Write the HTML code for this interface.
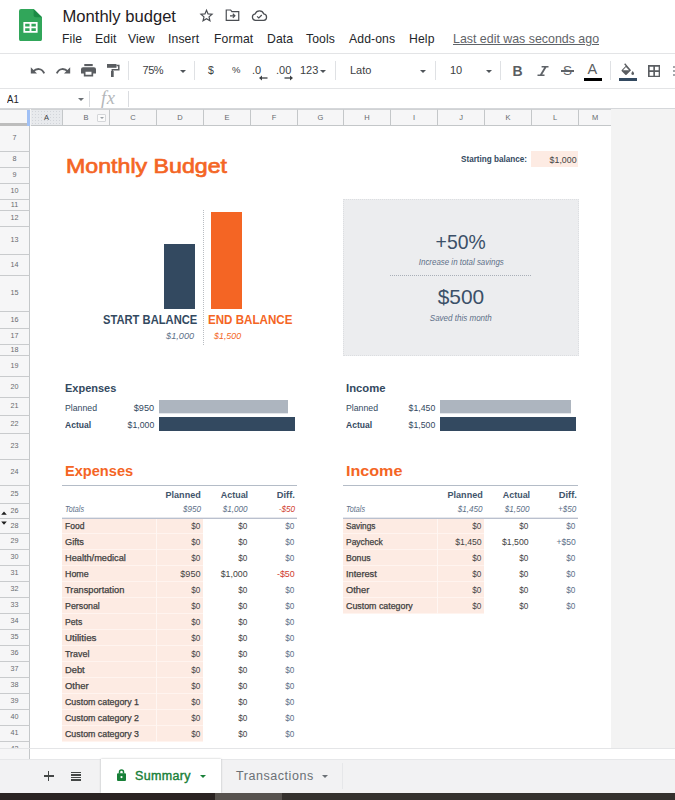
<!DOCTYPE html>
<html lang="en">
<head>
<meta charset="utf-8">
<title>Monthly budget</title>
<style>
html,body{margin:0;padding:0;}
body{width:675px;height:800px;overflow:hidden;position:relative;background:#fff;font-family:"Liberation Sans",sans-serif;color:#202124;}
div,span{box-sizing:border-box;}
.abs{position:absolute;}
#hdr{position:absolute;left:0;top:0;width:675px;height:54px;background:#fff;border-bottom:1px solid #e3e4e6;}
#title{position:absolute;left:62.5px;top:6.5px;font-size:16.6px;line-height:20px;color:#1f2023;white-space:nowrap;}
.menu{position:absolute;top:32px;letter-spacing:.12px;font-size:12.2px;line-height:15px;color:#24262a;white-space:nowrap;}
#tb{position:absolute;left:0;top:54px;width:675px;height:35px;background:#fff;border-bottom:1px solid #e3e4e6;}
.sep{position:absolute;top:7px;width:1px;height:19px;background:#dfe1e4;}
.tbt{position:absolute;top:9px;font-size:11px;line-height:14px;color:#3c4043;white-space:nowrap;}
.car{position:absolute;width:0;height:0;border-left:3.5px solid transparent;border-right:3.5px solid transparent;border-top:3.5px solid #50555a;}
#fb{position:absolute;left:0;top:89px;width:675px;height:20px;background:#fff;border-bottom:1px solid #d5d7da;}
#colh{position:absolute;left:0;top:109px;width:675px;height:17px;background:#f3f3f3;}
.ch{position:absolute;top:0;height:17px;background:#f6f6f7;border-right:1px solid #c4c7c9;border-bottom:1px solid #c4c7c9;border-top:1px solid #d0d2d4;font-size:7.5px;line-height:15.5px;text-align:center;color:#666a6e;}
.ch.sel{background:#e8eaed;color:#3c4043;background-image:radial-gradient(circle,#d2d5da .5px,transparent .7px);background-size:3px 3px;}
.flt{position:absolute;left:34px;top:4px;width:9px;height:8px;border:1px solid #d4d6d9;background:#fbfbfb;border-radius:1px;}
.flt:after{content:"";position:absolute;left:1.5px;top:2px;border-left:2px solid transparent;border-right:2px solid transparent;border-top:2.5px solid #9aa0a6;}
#rowh{position:absolute;left:0;top:0;width:30px;height:759px;}
.rh{position:absolute;left:0;width:30px;background:#f6f6f7;border-right:1px solid #c4c7c9;border-bottom:1px solid #c9cbcd;font-size:7.2px;text-align:center;color:#686b6e;}
#grid{position:absolute;left:30px;top:126px;width:581px;height:622px;background:#fff;}
.t{position:absolute;height:16px;line-height:17px;font-size:9.6px;white-space:nowrap;}
.r{text-align:right;}
.sx{display:inline-block;transform:scaleX(.9);transform-origin:left center;}
.r .sx{transform-origin:right center;}
.pk{position:absolute;background:#fdebe3;border-bottom:1px solid #fff4ef;}
.cat{color:#3d3d3d;-webkit-text-stroke:.3px #3d3d3d;}
.cat .sx{transform:scaleX(.95);}
.num{color:#434343;}
.dif{color:#5d7088;}
.dif.neg{color:#d0402e;}
.navy{color:#334960;}
.or{color:#f46524;}
.tx{position:absolute;white-space:nowrap;}
</style>
</head>
<body>
<!-- ===== header ===== -->
<div id="hdr">
  <svg class="abs" style="left:19.400px;top:8.700px" width="23" height="32.200" viewBox="0 0 22 31" preserveAspectRatio="none">
    <path d="M2 0h12l8 8v21a2 2 0 0 1-2 2H2a2 2 0 0 1-2-2V2a2 2 0 0 1 2-2z" fill="#31a65a"/>
    <path d="M14 0l8 8h-6a2 2 0 0 1-2-2z" fill="#1b8a45"/>
    <path d="M4.2 12.6h13.6v10.2H4.2z M5.9 14.3v2.5h4.2v-2.5z M11.9 14.3v2.5h4.2v-2.5z M5.9 18.5v2.6h4.2v-2.6z M11.9 18.5v2.6h4.2v-2.6z" fill="#fff" fill-rule="evenodd"/>
  </svg>
  <div id="title">Monthly budget</div>
  <!-- star -->
  <svg class="abs" style="left:198.500px;top:7.700px" width="15" height="15" viewBox="0 0 24 24"><path d="M12 3.6l2.5 5.9 6.4.55-4.85 4.2 1.45 6.25L12 17.2l-5.5 3.3 1.45-6.25L3.1 10.05l6.4-.55z" fill="none" stroke="#4a4d52" stroke-width="1.9" stroke-linejoin="miter"/></svg>
  <!-- move -->
  <svg class="abs" style="left:225px;top:8px" width="15" height="14" viewBox="0 0 24 22"><path d="M2 3h7l2 2.5h11v14H2z" fill="none" stroke="#4a4d52" stroke-width="1.9"/><path d="M8 12.3h7M12.5 9l3.4 3.3-3.4 3.3" fill="none" stroke="#4a4d52" stroke-width="1.8"/></svg>
  <!-- cloud -->
  <svg class="abs" style="left:251px;top:9px" width="17" height="13" viewBox="0 0 26 20"><path d="M7 17.5a5 5 0 0 1-.6-9.95A7 7 0 0 1 19.6 7.6 5 5 0 0 1 19.5 17.5z" fill="none" stroke="#4a4d52" stroke-width="1.9"/><path d="M9.3 11.3l2.6 2.5 4.6-4.6" fill="none" stroke="#4a4d52" stroke-width="1.8"/></svg>
  <div class="menu" style="left:62px">File</div>
  <div class="menu" style="left:95px">Edit</div>
  <div class="menu" style="left:128px">View</div>
  <div class="menu" style="left:168px">Insert</div>
  <div class="menu" style="left:214px">Format</div>
  <div class="menu" style="left:267px">Data</div>
  <div class="menu" style="left:306px">Tools</div>
  <div class="menu" style="left:349px">Add-ons</div>
  <div class="menu" style="left:409px">Help</div>
  <div class="menu" style="left:453px;color:#5f6368;text-decoration:underline;font-size:12.4px;letter-spacing:0">Last edit was seconds ago</div>
</div>
<!-- ===== toolbar ===== -->
<div id="tb">
  <!-- undo -->
  <svg class="abs" style="left:30px;top:12px" width="16" height="10" viewBox="0 0 16 10"><path d="M3.2 5.4C5 3.6 7 2.9 9 3.1c2.300.2 4.200 1.700 5.200 4.300" fill="none" stroke="#5a5d61" stroke-width="1.9"/><path d="M.8 1.200v6.200h6.200z" fill="#5a5d61"/></svg>
  <!-- redo -->
  <svg class="abs" style="left:55px;top:12px" width="16" height="10" viewBox="0 0 16 10"><path d="M12.800 5.400C11 3.600 9 2.900 7 3.100 4.700 3.300 2.800 4.800 1.800 7.400" fill="none" stroke="#5a5d61" stroke-width="1.900"/><path d="M15.200 1.200v6.200H9z" fill="#5a5d61"/></svg>
  <!-- print -->
  <svg class="abs" style="left:80.500px;top:10px" width="15" height="12.500" viewBox="0 0 16 13" preserveAspectRatio="none"><path d="M3.500 0h9v2.200h-9z" fill="#5a5d61"/><path d="M2.200 3.300h11.600A2.200 2.200 0 0 1 16 5.500V10h-3v3H3v-3H0V5.500a2.200 2.200 0 0 1 2.200-2.200zM4.800 8v3.300h6.400V8z" fill="#5a5d61" fill-rule="evenodd"/></svg>
  <!-- paint format -->
  <svg class="abs" style="left:105.500px;top:10px" width="14" height="13" viewBox="0 0 14 13"><path d="M1 0h9.500v3.800H1z" fill="#5a5d61"/><path d="M10.500 1.600h2.300v4.200H6.300v1.500" fill="none" stroke="#5a5d61" stroke-width="1.500"/><path d="M5 7h2.700v6H5z" fill="#5a5d61"/></svg>
  <div class="sep" style="left:128px"></div>
  <div class="tbt" style="left:142.5px;letter-spacing:-.45px">75%</div>
  <div class="car" style="left:179.500px;top:16px"></div>
  <div class="sep" style="left:194px"></div>
  <div class="tbt" style="left:208px;font-size:10.500px">$</div>
  <div class="tbt" style="left:232px;font-size:9.500px">%</div>
  <div class="tbt" style="left:252px;font-size:11px">.0</div>
  <svg class="abs" style="left:259px;top:21px" width="9" height="6" viewBox="0 0 9 6"><path d="M2 3h6.500" stroke="#3c4043" stroke-width="1.300"/><path d="M0 3l3-2.600v5.200z" fill="#3c4043"/></svg>
  <div class="tbt" style="left:276px;font-size:11px">.00</div>
  <svg class="abs" style="left:284px;top:21px" width="9" height="6" viewBox="0 0 9 6"><path d="M.5 3H7" stroke="#3c4043" stroke-width="1.300"/><path d="M9 3L6 .4v5.200z" fill="#3c4043"/></svg>
  <div class="tbt" style="left:300px;font-size:11px">123</div>
  <div class="car" style="left:319.500px;top:16px"></div>
  <div class="sep" style="left:335px"></div>
  <div class="tbt" style="left:350px">Lato</div>
  <div class="car" style="left:420px;top:16px"></div>
  <div class="sep" style="left:435px"></div>
  <div class="tbt" style="left:450px">10</div>
  <div class="car" style="left:486px;top:16px"></div>
  <div class="sep" style="left:500px"></div>
  <div class="tbt" style="left:512.500px;top:8px;font-size:14px;line-height:18px;font-weight:bold;color:#5a5d61">B</div>
  <svg class="abs" style="left:537px;top:12px" width="12" height="10" viewBox="0 0 12 10"><path d="M4.600 0h6.900v1.600H9.400L5.200 8.400h2.300V10H.500V8.400h2.500L7.200 1.600H4.600z" fill="#5f6368"/></svg>
  <div class="tbt" style="left:563px;top:8px;font-size:13.500px;line-height:18px;color:#5f6368">S</div><div class="abs" style="left:561px;top:16.400px;width:12.500px;height:1.300px;background:#5f6368"></div>
  <div class="tbt" style="left:587.500px;top:6px;font-size:14.500px;line-height:18px;color:#5a5d61">A</div>
  <div class="abs" style="left:584px;top:24px;width:18px;height:3px;background:#000"></div>
  <div class="sep" style="left:610px"></div>
  <!-- fill -->
  <svg class="abs" style="left:620.500px;top:8.500px" width="13.600" height="12.200" viewBox="0 0 15 13" preserveAspectRatio="none"><path d="M4.600.3L3.500 1.400l1.700 1.700L.9 7.400a.9.900 0 0 0 0 1.300l3.900 3.900a.9.900 0 0 0 1.300 0l5-5zM5.500 4.300L8.900 7.700H2.100z" fill="#5a5d61" fill-rule="evenodd"/><path d="M12.900 8.600s-1.500 1.700-1.500 2.700a1.500 1.500 0 0 0 3 0c0-1-1.500-2.700-1.500-2.700z" fill="#5a5d61"/></svg>
  <div class="abs" style="left:618.500px;top:24px;width:18.500px;height:3.300px;background:#334960"></div>
  <!-- borders -->
  <svg class="abs" style="left:647.700px;top:10.700px" width="12.300" height="12.300" viewBox="0 0 12 12"><path d="M.8.800h10.400v10.400H.8zM6 .8v10.400M.8 6h10.400" fill="none" stroke="#5a5d61" stroke-width="1.600"/></svg>
  <!-- merge (clipped) -->
  <div class="abs" style="left:673px;top:12px;width:4px;height:1.600px;background:#a4a7ab"></div>
  <div class="abs" style="left:673px;top:16px;width:4px;height:1.600px;background:#a4a7ab"></div>
  <div class="abs" style="left:673px;top:20px;width:4px;height:1.600px;background:#a4a7ab"></div>
</div>

<!-- ===== formula bar ===== -->
<div id="fb">
  <div class="abs" style="left:7px;top:3px;font-size:11px;line-height:14px;color:#202124;transform:scaleX(.87);transform-origin:left center">A1</div>
  <div class="car" style="left:78px;top:9px;border-left-width:3px;border-right-width:3px;border-top-width:3px;border-top-color:#6b7075"></div>
  <div class="abs" style="left:89px;top:2px;width:1px;height:16px;background:#dadce0"></div>
  <div class="abs" style="left:101px;top:-1px;font-family:'Liberation Serif',serif;font-style:italic;font-size:18.5px;line-height:20px;letter-spacing:.5px;color:#b4b7ba">fx</div>
  <div class="abs" style="left:128px;top:2px;width:1px;height:16px;background:#dadce0"></div>
</div>

<!-- ===== column headers ===== -->
<div id="colh">
<div class="ch sel" style="left:31px;width:32px">A</div>
<div class="ch" style="left:63px;width:47px">B<span class="flt"></span></div>
<div class="ch" style="left:110px;width:47px">C</div>
<div class="ch" style="left:157px;width:47px">D</div>
<div class="ch" style="left:204px;width:47px">E</div>
<div class="ch" style="left:251px;width:47px">F</div>
<div class="ch" style="left:298px;width:46px">G</div>
<div class="ch" style="left:344px;width:47px">H</div>
<div class="ch" style="left:391px;width:47px">I</div>
<div class="ch" style="left:438px;width:47px">J</div>
<div class="ch" style="left:485px;width:47px">K</div>
<div class="ch" style="left:532px;width:47px">L</div>
<div class="ch" style="left:579px;width:33px">M</div>
</div>
<div class="abs" style="left:611px;top:109px;width:64px;height:640px;background:#f3f3f3"></div>
<!-- ===== row headers ===== -->
<div id="rowh">
<div class="abs" style="left:0;top:109px;width:30px;height:17px;background:#f6f6f7;border-top:1px solid #d0d2d4"></div>
<div class="rh" style="top:126px;height:26px;line-height:24.5px">7</div>
<div class="rh" style="top:152px;height:16px;line-height:14.5px">8</div>
<div class="rh" style="top:168px;height:16px;line-height:14.5px">9</div>
<div class="rh" style="top:184px;height:16px;line-height:14.5px">10</div>
<div class="rh" style="top:200px;height:11px;line-height:9.5px">11</div>
<div class="rh" style="top:211px;height:16px;line-height:14.5px">12</div>
<div class="rh" style="top:227px;height:28px;line-height:26.5px">13</div>
<div class="rh" style="top:255px;height:21px;line-height:19.5px">14</div>
<div class="rh" style="top:276px;height:36px;line-height:34.5px">15</div>
<div class="rh" style="top:312px;height:17px;line-height:15.5px">16</div>
<div class="rh" style="top:329px;height:16px;line-height:14.5px">17</div>
<div class="rh" style="top:345px;height:11px;line-height:9.5px">18</div>
<div class="rh" style="top:356px;height:21px;line-height:19.5px">19</div>
<div class="rh" style="top:377px;height:21px;line-height:19.5px">20</div>
<div class="rh" style="top:398px;height:18px;line-height:16.5px">21</div>
<div class="rh" style="top:416px;height:18px;line-height:16.5px">22</div>
<div class="rh" style="top:434px;height:26px;line-height:24.5px">23</div>
<div class="rh" style="top:460px;height:26px;line-height:24.5px">24</div>
<div class="rh" style="top:486px;height:18px;line-height:16.5px">25</div>
<div class="rh" style="top:504px;height:15px;line-height:13.5px">26</div>
<div class="rh" style="top:519px;height:15px;line-height:13.5px">28</div>
<div class="rh" style="top:534px;height:16px;line-height:14.5px">29</div>
<div class="rh" style="top:550px;height:16px;line-height:14.5px">30</div>
<div class="rh" style="top:566px;height:16px;line-height:14.5px">31</div>
<div class="rh" style="top:582px;height:16px;line-height:14.5px">32</div>
<div class="rh" style="top:598px;height:16px;line-height:14.5px">33</div>
<div class="rh" style="top:614px;height:16px;line-height:14.5px">34</div>
<div class="rh" style="top:630px;height:16px;line-height:14.5px">35</div>
<div class="rh" style="top:646px;height:16px;line-height:14.5px">36</div>
<div class="rh" style="top:662px;height:16px;line-height:14.5px">37</div>
<div class="rh" style="top:678px;height:16px;line-height:14.5px">38</div>
<div class="rh" style="top:694px;height:16px;line-height:14.5px">39</div>
<div class="rh" style="top:710px;height:16px;line-height:14.5px">40</div>
<div class="rh" style="top:726px;height:16px;line-height:14.5px">41</div>
<div class="rh" style="top:742px;height:16px;line-height:14.5px">42</div>
<div class="abs" style="left:0;top:748px;width:30px;height:11px;background:#f6f6f7;border-right:1px solid #c4c7c9;border-top:1px solid #c9cbcd"></div>
<div class="abs" style="left:0;top:123px;width:28px;height:3px;background:#bdbdbd"></div>
<svg class="abs" style="left:0;top:510px" width="10" height="16" viewBox="0 0 10 16"><path d="M1.200 4.700h5.600L4 1.500z M1.200 11.500h5.600L4 14.700z" fill="#1f1f1f"/></svg>
<div class="abs" style="left:27px;top:110px;width:3px;height:16px;background:#a0c0f5"></div>
</div>
<!-- ===== grid ===== -->
<div id="grid"></div>
<!-- ===== sheet content ===== -->
<div class="abs" style="left:531px;top:151px;width:47px;height:16px;background:#fdebe3"></div>
<!-- balance chart -->
<div class="abs" style="left:164px;top:244px;width:31px;height:65px;background:#334960"></div>
<div class="abs" style="left:211px;top:212px;width:31px;height:97px;background:#f46524"></div>
<div class="abs" style="left:203px;top:210px;width:0;height:135px;border-left:1px dotted #b9bdc2"></div>
<!-- summary panel -->
<div class="abs" style="left:343px;top:199px;width:236px;height:157px;background:#ecedef;border:1px dotted #dcdee1"></div>
<div class="abs" style="left:390px;top:275px;width:141px;height:0;border-top:1px dotted #a9afb8"></div>
<!-- sparkline bars -->
<div class="abs" style="left:159px;top:400px;width:129px;height:14px;background:linear-gradient(#adb5bf 0,#adb5bf 13px,#e3e6ea 13px)"></div>
<div class="abs" style="left:159px;top:417px;width:136px;height:14px;background:#334960"></div>
<div class="abs" style="left:440px;top:400px;width:131px;height:14px;background:linear-gradient(#adb5bf 0,#adb5bf 13px,#e3e6ea 13px)"></div>
<div class="abs" style="left:440px;top:417px;width:136px;height:14px;background:#334960"></div>
<!-- table rules -->
<div class="abs" style="left:62px;top:485px;width:235px;height:1px;background:#b4bcc7"></div>
<div class="abs" style="left:343px;top:485px;width:235px;height:1px;background:#b4bcc7"></div>
<div class="abs" style="left:62px;top:517px;width:235px;height:2px;background:#bac0ce;border-top:1px solid #e6e8ed;z-index:3"></div>
<div class="abs" style="left:343px;top:517px;width:235px;height:2px;background:#bac0ce;border-top:1px solid #e6e8ed;z-index:3"></div>
<div class="pk" style="left:62px;top:519px;width:141px;height:15px"></div>
<div class="pk" style="left:62px;top:534px;width:141px;height:16px"></div>
<div class="pk" style="left:62px;top:550px;width:141px;height:16px"></div>
<div class="pk" style="left:62px;top:566px;width:141px;height:16px"></div>
<div class="pk" style="left:62px;top:582px;width:141px;height:16px"></div>
<div class="pk" style="left:62px;top:598px;width:141px;height:16px"></div>
<div class="pk" style="left:62px;top:614px;width:141px;height:16px"></div>
<div class="pk" style="left:62px;top:630px;width:141px;height:16px"></div>
<div class="pk" style="left:62px;top:646px;width:141px;height:16px"></div>
<div class="pk" style="left:62px;top:662px;width:141px;height:16px"></div>
<div class="pk" style="left:62px;top:678px;width:141px;height:16px"></div>
<div class="pk" style="left:62px;top:694px;width:141px;height:16px"></div>
<div class="pk" style="left:62px;top:710px;width:141px;height:16px"></div>
<div class="pk" style="left:62px;top:726px;width:141px;height:16px"></div>
<div class="abs" style="left:156px;top:519px;width:1px;height:223px;background:#fff6f2"></div>
<div class="pk" style="left:343px;top:519px;width:141px;height:15px"></div>
<div class="pk" style="left:343px;top:534px;width:141px;height:16px"></div>
<div class="pk" style="left:343px;top:550px;width:141px;height:16px"></div>
<div class="pk" style="left:343px;top:566px;width:141px;height:16px"></div>
<div class="pk" style="left:343px;top:582px;width:141px;height:16px"></div>
<div class="pk" style="left:343px;top:598px;width:141px;height:16px"></div>
<div class="abs" style="left:437px;top:519px;width:1px;height:95px;background:#fff6f2"></div>
<div class="tx" style="top:155.33px;font-size:19.3px;line-height:23.16px;color:#f46524;-webkit-text-stroke:0.65px #f46524;left:66.3px;"><span style="display:inline-block;transform:scaleX(1.202);transform-origin:left center">Monthly Budget</span></div>
<div class="tx" style="top:154.20px;font-size:9.3px;line-height:11.16px;color:#334960;font-weight:bold;left:461.4px;"><span style="display:inline-block;transform:scaleX(0.875);transform-origin:left center">Starting balance:</span></div>
<div class="tx" style="top:154.77px;font-size:8.7px;line-height:10.44px;color:#434343;right:98.6px;"><span style="display:inline-block;transform:scaleX(1.016);transform-origin:right center">$1,000</span></div>
<div class="tx" style="top:313.37px;font-size:12.5px;line-height:15.0px;color:#334960;font-weight:bold;left:102.8px;"><span style="display:inline-block;transform:scaleX(0.895);transform-origin:left center">START BALANCE</span></div>
<div class="tx" style="top:313.37px;font-size:12.5px;line-height:15.0px;color:#f46524;font-weight:bold;left:207.6px;"><span style="display:inline-block;transform:scaleX(0.928);transform-origin:left center">END BALANCE</span></div>
<div class="tx" style="top:330.01px;font-size:9.5px;line-height:11.4px;color:#5d7088;font-style:italic;right:480.7px;"><span style="display:inline-block;transform:scaleX(0.963);transform-origin:right center">$1,000</span></div>
<div class="tx" style="top:330.01px;font-size:9.5px;line-height:11.4px;color:#f46524;font-style:italic;right:434.4px;"><span style="display:inline-block;transform:scaleX(0.929);transform-origin:right center">$1,500</span></div>
<div class="tx" style="top:229.50px;font-size:20.6px;line-height:24.72px;color:#3b5068;left:311px;width:300px;text-align:center;"><span style="display:inline-block;transform:scaleX(0.939);transform-origin:center center">+50%</span></div>
<div class="tx" style="top:257.08px;font-size:9px;line-height:10.8px;color:#5d7088;font-style:italic;left:311px;width:300px;text-align:center;"><span style="display:inline-block;transform:scaleX(0.880);transform-origin:center center">Increase in total savings</span></div>
<div class="tx" style="top:285.30px;font-size:20.6px;line-height:24.72px;color:#3b5068;left:311px;width:300px;text-align:center;"><span style="display:inline-block;transform:scaleX(1.015);transform-origin:center center">$500</span></div>
<div class="tx" style="top:312.78px;font-size:9px;line-height:10.8px;color:#5d7088;font-style:italic;left:311px;width:300px;text-align:center;"><span style="display:inline-block;transform:scaleX(0.891);transform-origin:center center">Saved this month</span></div>
<div class="tx" style="top:381.52px;font-size:11.5px;line-height:13.8px;color:#334960;font-weight:bold;left:65px;"><span style="display:inline-block;transform:scaleX(0.955);transform-origin:left center">Expenses</span></div>
<div class="tx" style="top:402.56px;font-size:8.6px;line-height:10.32px;color:#334960;left:65px;"><span style="display:inline-block;transform:scaleX(1.014);transform-origin:left center">Planned</span></div>
<div class="tx" style="top:420.16px;font-size:8.6px;line-height:10.32px;color:#334960;font-weight:bold;left:65px;"><span style="display:inline-block;transform:scaleX(0.990);transform-origin:left center">Actual</span></div>
<div class="tx" style="top:463.25px;font-size:14px;line-height:16.8px;color:#f46524;font-weight:bold;left:65.4px;"><span style="display:inline-block;transform:scaleX(1.042);transform-origin:left center">Expenses</span></div>
<div class="tx" style="top:490.19px;font-size:9.2px;line-height:11.04px;color:#3f546b;font-weight:bold;right:474.2px;"><span style="display:inline-block;transform:scaleX(0.985);transform-origin:right center">Planned</span></div>
<div class="tx" style="top:490.19px;font-size:9.2px;line-height:11.04px;color:#3f546b;font-weight:bold;right:427.4px;"><span style="display:inline-block;transform:scaleX(0.972);transform-origin:right center">Actual</span></div>
<div class="tx" style="top:490.19px;font-size:9.2px;line-height:11.04px;color:#3f546b;font-weight:bold;right:380.0px;"><span style="display:inline-block;transform:scaleX(1.019);transform-origin:right center">Diff.</span></div>
<div class="tx" style="top:504.26px;font-size:8.6px;line-height:10.32px;color:#5d7088;font-style:italic;left:65px;"><span style="display:inline-block;transform:scaleX(0.840);transform-origin:left center">Totals</span></div>
<div class="tx" style="top:381.52px;font-size:11.5px;line-height:13.8px;color:#334960;font-weight:bold;left:345.8px;"><span style="display:inline-block;transform:scaleX(0.981);transform-origin:left center">Income</span></div>
<div class="tx" style="top:402.56px;font-size:8.6px;line-height:10.32px;color:#334960;left:345.8px;"><span style="display:inline-block;transform:scaleX(1.014);transform-origin:left center">Planned</span></div>
<div class="tx" style="top:420.16px;font-size:8.6px;line-height:10.32px;color:#334960;font-weight:bold;left:345.8px;"><span style="display:inline-block;transform:scaleX(0.990);transform-origin:left center">Actual</span></div>
<div class="tx" style="top:463.25px;font-size:14px;line-height:16.8px;color:#f46524;font-weight:bold;left:346px;"><span style="display:inline-block;transform:scaleX(1.151);transform-origin:left center">Income</span></div>
<div class="tx" style="top:490.19px;font-size:9.2px;line-height:11.04px;color:#3f546b;font-weight:bold;right:192.2px;"><span style="display:inline-block;transform:scaleX(0.985);transform-origin:right center">Planned</span></div>
<div class="tx" style="top:490.19px;font-size:9.2px;line-height:11.04px;color:#3f546b;font-weight:bold;right:145.4px;"><span style="display:inline-block;transform:scaleX(0.972);transform-origin:right center">Actual</span></div>
<div class="tx" style="top:490.19px;font-size:9.2px;line-height:11.04px;color:#3f546b;font-weight:bold;right:98.0px;"><span style="display:inline-block;transform:scaleX(1.019);transform-origin:right center">Diff.</span></div>
<div class="tx" style="top:504.26px;font-size:8.6px;line-height:10.32px;color:#5d7088;font-style:italic;left:345.8px;"><span style="display:inline-block;transform:scaleX(0.840);transform-origin:left center">Totals</span></div>
<div class="tx" style="top:402.56px;font-size:8.6px;line-height:10.32px;color:#334960;right:521.1px;"><span style="display:inline-block;transform:scaleX(1.067);transform-origin:right center">$950</span></div>
<div class="tx" style="top:420.16px;font-size:8.6px;line-height:10.32px;color:#334960;right:521.1px;"><span style="display:inline-block;transform:scaleX(1.015);transform-origin:right center">$1,000</span></div>
<div class="tx" style="top:402.56px;font-size:8.6px;line-height:10.32px;color:#334960;right:240.0px;"><span style="display:inline-block;transform:scaleX(1.015);transform-origin:right center">$1,450</span></div>
<div class="tx" style="top:420.16px;font-size:8.6px;line-height:10.32px;color:#334960;right:240.0px;"><span style="display:inline-block;transform:scaleX(1.015);transform-origin:right center">$1,500</span></div>
<div class="tx" style="top:503.88px;font-size:9px;line-height:10.8px;color:#5d7088;font-style:italic;right:473.7px;"><span style="display:inline-block;transform:scaleX(0.900);transform-origin:right center">$950</span></div>
<div class="tx" style="top:503.88px;font-size:9px;line-height:10.8px;color:#5d7088;font-style:italic;right:427.0px;"><span style="display:inline-block;transform:scaleX(0.900);transform-origin:right center">$1,000</span></div>
<div class="tx" style="top:503.88px;font-size:9px;line-height:10.8px;color:#d0402e;font-style:italic;right:380.0px;"><span style="display:inline-block;transform:scaleX(0.900);transform-origin:right center">-$50</span></div>
<div class="tx" style="top:503.88px;font-size:9px;line-height:10.8px;color:#5d7088;font-style:italic;right:192.2px;"><span style="display:inline-block;transform:scaleX(0.900);transform-origin:right center">$1,450</span></div>
<div class="tx" style="top:503.88px;font-size:9px;line-height:10.8px;color:#5d7088;font-style:italic;right:145.5px;"><span style="display:inline-block;transform:scaleX(0.900);transform-origin:right center">$1,500</span></div>
<div class="tx" style="top:503.88px;font-size:9px;line-height:10.8px;color:#5d7088;font-style:italic;right:98.5px;"><span style="display:inline-block;transform:scaleX(0.900);transform-origin:right center">+$50</span></div>
<div class="tx" style="top:520.95px;font-size:8.4px;line-height:10.08px;color:#3f3f3f;-webkit-text-stroke:0.25px #3f3f3f;left:65.2px;"><span style="display:inline-block;transform:scaleX(1.016);transform-origin:left center">Food</span></div>
<div class="tx" style="top:520.95px;font-size:8.4px;line-height:10.08px;color:#434343;right:474.2px;"><span style="display:inline-block;transform:scaleX(0.980);transform-origin:right center">$0</span></div>
<div class="tx" style="top:520.95px;font-size:8.4px;line-height:10.08px;color:#434343;right:427.2px;"><span style="display:inline-block;transform:scaleX(0.980);transform-origin:right center">$0</span></div>
<div class="tx" style="top:520.95px;font-size:8.4px;line-height:10.08px;color:#5d7088;right:380.2px;"><span style="display:inline-block;transform:scaleX(0.980);transform-origin:right center">$0</span></div>
<div class="tx" style="top:536.95px;font-size:8.4px;line-height:10.08px;color:#3f3f3f;-webkit-text-stroke:0.25px #3f3f3f;left:65.2px;"><span style="display:inline-block;transform:scaleX(1.103);transform-origin:left center">Gifts</span></div>
<div class="tx" style="top:536.95px;font-size:8.4px;line-height:10.08px;color:#434343;right:474.2px;"><span style="display:inline-block;transform:scaleX(0.980);transform-origin:right center">$0</span></div>
<div class="tx" style="top:536.95px;font-size:8.4px;line-height:10.08px;color:#434343;right:427.2px;"><span style="display:inline-block;transform:scaleX(0.980);transform-origin:right center">$0</span></div>
<div class="tx" style="top:536.95px;font-size:8.4px;line-height:10.08px;color:#5d7088;right:380.2px;"><span style="display:inline-block;transform:scaleX(0.980);transform-origin:right center">$0</span></div>
<div class="tx" style="top:552.95px;font-size:8.4px;line-height:10.08px;color:#3f3f3f;-webkit-text-stroke:0.25px #3f3f3f;left:65.2px;"><span style="display:inline-block;transform:scaleX(1.099);transform-origin:left center">Health/medical</span></div>
<div class="tx" style="top:552.95px;font-size:8.4px;line-height:10.08px;color:#434343;right:474.2px;"><span style="display:inline-block;transform:scaleX(0.980);transform-origin:right center">$0</span></div>
<div class="tx" style="top:552.95px;font-size:8.4px;line-height:10.08px;color:#434343;right:427.2px;"><span style="display:inline-block;transform:scaleX(0.980);transform-origin:right center">$0</span></div>
<div class="tx" style="top:552.95px;font-size:8.4px;line-height:10.08px;color:#5d7088;right:380.2px;"><span style="display:inline-block;transform:scaleX(0.980);transform-origin:right center">$0</span></div>
<div class="tx" style="top:568.95px;font-size:8.4px;line-height:10.08px;color:#3f3f3f;-webkit-text-stroke:0.25px #3f3f3f;left:65.2px;"><span style="display:inline-block;transform:scaleX(1.061);transform-origin:left center">Home</span></div>
<div class="tx" style="top:568.95px;font-size:8.4px;line-height:10.08px;color:#434343;right:474.2px;"><span style="display:inline-block;transform:scaleX(1.094);transform-origin:right center">$950</span></div>
<div class="tx" style="top:568.95px;font-size:8.4px;line-height:10.08px;color:#434343;right:427.2px;"><span style="display:inline-block;transform:scaleX(1.050);transform-origin:right center">$1,000</span></div>
<div class="tx" style="top:568.95px;font-size:8.4px;line-height:10.08px;color:#d0402e;right:380.2px;"><span style="display:inline-block;transform:scaleX(1.062);transform-origin:right center">-$50</span></div>
<div class="tx" style="top:584.95px;font-size:8.4px;line-height:10.08px;color:#3f3f3f;-webkit-text-stroke:0.25px #3f3f3f;left:65.2px;"><span style="display:inline-block;transform:scaleX(1.104);transform-origin:left center">Transportation</span></div>
<div class="tx" style="top:584.95px;font-size:8.4px;line-height:10.08px;color:#434343;right:474.2px;"><span style="display:inline-block;transform:scaleX(0.980);transform-origin:right center">$0</span></div>
<div class="tx" style="top:584.95px;font-size:8.4px;line-height:10.08px;color:#434343;right:427.2px;"><span style="display:inline-block;transform:scaleX(0.980);transform-origin:right center">$0</span></div>
<div class="tx" style="top:584.95px;font-size:8.4px;line-height:10.08px;color:#5d7088;right:380.2px;"><span style="display:inline-block;transform:scaleX(0.980);transform-origin:right center">$0</span></div>
<div class="tx" style="top:600.95px;font-size:8.4px;line-height:10.08px;color:#3f3f3f;-webkit-text-stroke:0.25px #3f3f3f;left:65.2px;"><span style="display:inline-block;transform:scaleX(1.053);transform-origin:left center">Personal</span></div>
<div class="tx" style="top:600.95px;font-size:8.4px;line-height:10.08px;color:#434343;right:474.2px;"><span style="display:inline-block;transform:scaleX(0.980);transform-origin:right center">$0</span></div>
<div class="tx" style="top:600.95px;font-size:8.4px;line-height:10.08px;color:#434343;right:427.2px;"><span style="display:inline-block;transform:scaleX(0.980);transform-origin:right center">$0</span></div>
<div class="tx" style="top:600.95px;font-size:8.4px;line-height:10.08px;color:#5d7088;right:380.2px;"><span style="display:inline-block;transform:scaleX(0.980);transform-origin:right center">$0</span></div>
<div class="tx" style="top:616.95px;font-size:8.4px;line-height:10.08px;color:#3f3f3f;-webkit-text-stroke:0.25px #3f3f3f;left:65.2px;"><span style="display:inline-block;transform:scaleX(1.032);transform-origin:left center">Pets</span></div>
<div class="tx" style="top:616.95px;font-size:8.4px;line-height:10.08px;color:#434343;right:474.2px;"><span style="display:inline-block;transform:scaleX(0.980);transform-origin:right center">$0</span></div>
<div class="tx" style="top:616.95px;font-size:8.4px;line-height:10.08px;color:#434343;right:427.2px;"><span style="display:inline-block;transform:scaleX(0.980);transform-origin:right center">$0</span></div>
<div class="tx" style="top:616.95px;font-size:8.4px;line-height:10.08px;color:#5d7088;right:380.2px;"><span style="display:inline-block;transform:scaleX(0.980);transform-origin:right center">$0</span></div>
<div class="tx" style="top:632.95px;font-size:8.4px;line-height:10.08px;color:#3f3f3f;-webkit-text-stroke:0.25px #3f3f3f;left:65.2px;"><span style="display:inline-block;transform:scaleX(1.167);transform-origin:left center">Utilities</span></div>
<div class="tx" style="top:632.95px;font-size:8.4px;line-height:10.08px;color:#434343;right:474.2px;"><span style="display:inline-block;transform:scaleX(0.980);transform-origin:right center">$0</span></div>
<div class="tx" style="top:632.95px;font-size:8.4px;line-height:10.08px;color:#434343;right:427.2px;"><span style="display:inline-block;transform:scaleX(0.980);transform-origin:right center">$0</span></div>
<div class="tx" style="top:632.95px;font-size:8.4px;line-height:10.08px;color:#5d7088;right:380.2px;"><span style="display:inline-block;transform:scaleX(0.980);transform-origin:right center">$0</span></div>
<div class="tx" style="top:648.95px;font-size:8.4px;line-height:10.08px;color:#3f3f3f;-webkit-text-stroke:0.25px #3f3f3f;left:65.2px;"><span style="display:inline-block;transform:scaleX(1.062);transform-origin:left center">Travel</span></div>
<div class="tx" style="top:648.95px;font-size:8.4px;line-height:10.08px;color:#434343;right:474.2px;"><span style="display:inline-block;transform:scaleX(0.980);transform-origin:right center">$0</span></div>
<div class="tx" style="top:648.95px;font-size:8.4px;line-height:10.08px;color:#434343;right:427.2px;"><span style="display:inline-block;transform:scaleX(0.980);transform-origin:right center">$0</span></div>
<div class="tx" style="top:648.95px;font-size:8.4px;line-height:10.08px;color:#5d7088;right:380.2px;"><span style="display:inline-block;transform:scaleX(0.980);transform-origin:right center">$0</span></div>
<div class="tx" style="top:664.95px;font-size:8.4px;line-height:10.08px;color:#3f3f3f;-webkit-text-stroke:0.25px #3f3f3f;left:65.2px;"><span style="display:inline-block;transform:scaleX(1.113);transform-origin:left center">Debt</span></div>
<div class="tx" style="top:664.95px;font-size:8.4px;line-height:10.08px;color:#434343;right:474.2px;"><span style="display:inline-block;transform:scaleX(0.980);transform-origin:right center">$0</span></div>
<div class="tx" style="top:664.95px;font-size:8.4px;line-height:10.08px;color:#434343;right:427.2px;"><span style="display:inline-block;transform:scaleX(0.980);transform-origin:right center">$0</span></div>
<div class="tx" style="top:664.95px;font-size:8.4px;line-height:10.08px;color:#5d7088;right:380.2px;"><span style="display:inline-block;transform:scaleX(0.980);transform-origin:right center">$0</span></div>
<div class="tx" style="top:680.95px;font-size:8.4px;line-height:10.08px;color:#3f3f3f;-webkit-text-stroke:0.25px #3f3f3f;left:65.2px;"><span style="display:inline-block;transform:scaleX(1.131);transform-origin:left center">Other</span></div>
<div class="tx" style="top:680.95px;font-size:8.4px;line-height:10.08px;color:#434343;right:474.2px;"><span style="display:inline-block;transform:scaleX(0.980);transform-origin:right center">$0</span></div>
<div class="tx" style="top:680.95px;font-size:8.4px;line-height:10.08px;color:#434343;right:427.2px;"><span style="display:inline-block;transform:scaleX(0.980);transform-origin:right center">$0</span></div>
<div class="tx" style="top:680.95px;font-size:8.4px;line-height:10.08px;color:#5d7088;right:380.2px;"><span style="display:inline-block;transform:scaleX(0.980);transform-origin:right center">$0</span></div>
<div class="tx" style="top:696.95px;font-size:8.4px;line-height:10.08px;color:#3f3f3f;-webkit-text-stroke:0.25px #3f3f3f;left:65.2px;"><span style="display:inline-block;transform:scaleX(1.053);transform-origin:left center">Custom category 1</span></div>
<div class="tx" style="top:696.95px;font-size:8.4px;line-height:10.08px;color:#434343;right:474.2px;"><span style="display:inline-block;transform:scaleX(0.980);transform-origin:right center">$0</span></div>
<div class="tx" style="top:696.95px;font-size:8.4px;line-height:10.08px;color:#434343;right:427.2px;"><span style="display:inline-block;transform:scaleX(0.980);transform-origin:right center">$0</span></div>
<div class="tx" style="top:696.95px;font-size:8.4px;line-height:10.08px;color:#5d7088;right:380.2px;"><span style="display:inline-block;transform:scaleX(0.980);transform-origin:right center">$0</span></div>
<div class="tx" style="top:712.95px;font-size:8.4px;line-height:10.08px;color:#3f3f3f;-webkit-text-stroke:0.25px #3f3f3f;left:65.2px;"><span style="display:inline-block;transform:scaleX(1.053);transform-origin:left center">Custom category 2</span></div>
<div class="tx" style="top:712.95px;font-size:8.4px;line-height:10.08px;color:#434343;right:474.2px;"><span style="display:inline-block;transform:scaleX(0.980);transform-origin:right center">$0</span></div>
<div class="tx" style="top:712.95px;font-size:8.4px;line-height:10.08px;color:#434343;right:427.2px;"><span style="display:inline-block;transform:scaleX(0.980);transform-origin:right center">$0</span></div>
<div class="tx" style="top:712.95px;font-size:8.4px;line-height:10.08px;color:#5d7088;right:380.2px;"><span style="display:inline-block;transform:scaleX(0.980);transform-origin:right center">$0</span></div>
<div class="tx" style="top:728.95px;font-size:8.4px;line-height:10.08px;color:#3f3f3f;-webkit-text-stroke:0.25px #3f3f3f;left:65.2px;"><span style="display:inline-block;transform:scaleX(1.053);transform-origin:left center">Custom category 3</span></div>
<div class="tx" style="top:728.95px;font-size:8.4px;line-height:10.08px;color:#434343;right:474.2px;"><span style="display:inline-block;transform:scaleX(0.980);transform-origin:right center">$0</span></div>
<div class="tx" style="top:728.95px;font-size:8.4px;line-height:10.08px;color:#434343;right:427.2px;"><span style="display:inline-block;transform:scaleX(0.980);transform-origin:right center">$0</span></div>
<div class="tx" style="top:728.95px;font-size:8.4px;line-height:10.08px;color:#5d7088;right:380.2px;"><span style="display:inline-block;transform:scaleX(0.980);transform-origin:right center">$0</span></div>
<div class="tx" style="top:520.95px;font-size:8.4px;line-height:10.08px;color:#3f3f3f;-webkit-text-stroke:0.25px #3f3f3f;left:346.2px;"><span style="display:inline-block;transform:scaleX(0.987);transform-origin:left center">Savings</span></div>
<div class="tx" style="top:520.95px;font-size:8.4px;line-height:10.08px;color:#434343;right:193.2px;"><span style="display:inline-block;transform:scaleX(0.980);transform-origin:right center">$0</span></div>
<div class="tx" style="top:520.95px;font-size:8.4px;line-height:10.08px;color:#434343;right:146.2px;"><span style="display:inline-block;transform:scaleX(0.980);transform-origin:right center">$0</span></div>
<div class="tx" style="top:520.95px;font-size:8.4px;line-height:10.08px;color:#5d7088;right:99.2px;"><span style="display:inline-block;transform:scaleX(0.980);transform-origin:right center">$0</span></div>
<div class="tx" style="top:536.95px;font-size:8.4px;line-height:10.08px;color:#3f3f3f;-webkit-text-stroke:0.25px #3f3f3f;left:346.2px;"><span style="display:inline-block;transform:scaleX(1.011);transform-origin:left center">Paycheck</span></div>
<div class="tx" style="top:536.95px;font-size:8.4px;line-height:10.08px;color:#434343;right:193.2px;"><span style="display:inline-block;transform:scaleX(1.034);transform-origin:right center">$1,450</span></div>
<div class="tx" style="top:536.95px;font-size:8.4px;line-height:10.08px;color:#434343;right:146.2px;"><span style="display:inline-block;transform:scaleX(1.042);transform-origin:right center">$1,500</span></div>
<div class="tx" style="top:536.95px;font-size:8.4px;line-height:10.08px;color:#5d7088;right:99.2px;"><span style="display:inline-block;transform:scaleX(1.023);transform-origin:right center">+$50</span></div>
<div class="tx" style="top:552.95px;font-size:8.4px;line-height:10.08px;color:#3f3f3f;-webkit-text-stroke:0.25px #3f3f3f;left:346.2px;"><span style="display:inline-block;transform:scaleX(1.036);transform-origin:left center">Bonus</span></div>
<div class="tx" style="top:552.95px;font-size:8.4px;line-height:10.08px;color:#434343;right:193.2px;"><span style="display:inline-block;transform:scaleX(0.980);transform-origin:right center">$0</span></div>
<div class="tx" style="top:552.95px;font-size:8.4px;line-height:10.08px;color:#434343;right:146.2px;"><span style="display:inline-block;transform:scaleX(0.980);transform-origin:right center">$0</span></div>
<div class="tx" style="top:552.95px;font-size:8.4px;line-height:10.08px;color:#5d7088;right:99.2px;"><span style="display:inline-block;transform:scaleX(0.980);transform-origin:right center">$0</span></div>
<div class="tx" style="top:568.95px;font-size:8.4px;line-height:10.08px;color:#3f3f3f;-webkit-text-stroke:0.25px #3f3f3f;left:346.2px;"><span style="display:inline-block;transform:scaleX(1.102);transform-origin:left center">Interest</span></div>
<div class="tx" style="top:568.95px;font-size:8.4px;line-height:10.08px;color:#434343;right:193.2px;"><span style="display:inline-block;transform:scaleX(0.980);transform-origin:right center">$0</span></div>
<div class="tx" style="top:568.95px;font-size:8.4px;line-height:10.08px;color:#434343;right:146.2px;"><span style="display:inline-block;transform:scaleX(0.980);transform-origin:right center">$0</span></div>
<div class="tx" style="top:568.95px;font-size:8.4px;line-height:10.08px;color:#5d7088;right:99.2px;"><span style="display:inline-block;transform:scaleX(0.980);transform-origin:right center">$0</span></div>
<div class="tx" style="top:584.95px;font-size:8.4px;line-height:10.08px;color:#3f3f3f;-webkit-text-stroke:0.25px #3f3f3f;left:346.2px;"><span style="display:inline-block;transform:scaleX(1.112);transform-origin:left center">Other</span></div>
<div class="tx" style="top:584.95px;font-size:8.4px;line-height:10.08px;color:#434343;right:193.2px;"><span style="display:inline-block;transform:scaleX(0.980);transform-origin:right center">$0</span></div>
<div class="tx" style="top:584.95px;font-size:8.4px;line-height:10.08px;color:#434343;right:146.2px;"><span style="display:inline-block;transform:scaleX(0.980);transform-origin:right center">$0</span></div>
<div class="tx" style="top:584.95px;font-size:8.4px;line-height:10.08px;color:#5d7088;right:99.2px;"><span style="display:inline-block;transform:scaleX(0.980);transform-origin:right center">$0</span></div>
<div class="tx" style="top:600.95px;font-size:8.4px;line-height:10.08px;color:#3f3f3f;-webkit-text-stroke:0.25px #3f3f3f;left:346.2px;"><span style="display:inline-block;transform:scaleX(1.055);transform-origin:left center">Custom category</span></div>
<div class="tx" style="top:600.95px;font-size:8.4px;line-height:10.08px;color:#434343;right:193.2px;"><span style="display:inline-block;transform:scaleX(0.980);transform-origin:right center">$0</span></div>
<div class="tx" style="top:600.95px;font-size:8.4px;line-height:10.08px;color:#434343;right:146.2px;"><span style="display:inline-block;transform:scaleX(0.980);transform-origin:right center">$0</span></div>
<div class="tx" style="top:600.95px;font-size:8.4px;line-height:10.08px;color:#5d7088;right:99.2px;"><span style="display:inline-block;transform:scaleX(0.980);transform-origin:right center">$0</span></div>

<!-- ===== bottom ===== -->
<div class="abs" style="left:0;top:748px;width:675px;height:1px;background:#e4e5e7"></div>
<div class="abs" style="left:31px;top:749px;width:644px;height:10px;background:#fff"></div>
<div class="abs" style="left:0;top:759px;width:675px;height:34px;background:#f2f2f3;border-top:1px solid #e6e7e9"></div>
<div class="abs" style="left:43.5px;top:775.2px;width:10px;height:1.6px;background:#444746"></div>
<div class="abs" style="left:47.7px;top:771px;width:1.6px;height:10px;background:#444746"></div>
<div class="abs" style="left:71px;top:771.5px;width:10px;height:1.5px;background:#444746"></div>
<div class="abs" style="left:71px;top:774px;width:10px;height:1.5px;background:#444746"></div>
<div class="abs" style="left:71px;top:776.5px;width:10px;height:1.5px;background:#444746"></div>
<div class="abs" style="left:71px;top:779px;width:10px;height:1.5px;background:#444746"></div>
<div class="abs" style="left:101px;top:759px;width:120px;height:34px;background:#fff;box-shadow:0 0 2px rgba(60,64,67,.35)"></div>
<svg class="abs" style="left:117px;top:769px" width="9" height="12" viewBox="0 0 9 12"><path d="M2.500 4.500V3a2 2 0 0 1 4 0v1.500" fill="none" stroke="#188038" stroke-width="1.500"/><path d="M1 4.300h7a1 1 0 0 1 1 1V11a1 1 0 0 1-1 1H1a1 1 0 0 1-1-1V5.300a1 1 0 0 1 1-1zM4.500 7a1.100 1.100 0 1 0 0 2.200 1.100 1.100 0 0 0 0-2.200z" fill="#188038" fill-rule="evenodd"/></svg>
<div class="abs" style="left:135px;top:768px;font-size:12.5px;line-height:16px;color:#188038;-webkit-text-stroke:.4px #188038;letter-spacing:.35px;white-space:nowrap"><span>Summary</span></div>
<div class="car" style="left:200px;top:775px;border-top-color:#188038"></div>
<div class="abs" style="left:236px;top:768px;font-size:12.5px;line-height:16px;color:#6b7075;white-space:nowrap;letter-spacing:.55px">Transactions</div>
<div class="car" style="left:322px;top:775px;border-top-color:#6b7075"></div>
<div class="abs" style="left:342px;top:763px;width:1px;height:26px;background:#e6e7e9"></div>
<!-- desktop strip -->
<div class="abs" style="left:0;top:793px;width:675px;height:7px;background:#2a2322"></div>
<div class="abs" style="left:215px;top:793px;width:67px;height:7px;background:#57524e"></div>
<div class="abs" style="left:282px;top:793px;width:393px;height:7px;background:#35312d"></div>

</body>
</html>
